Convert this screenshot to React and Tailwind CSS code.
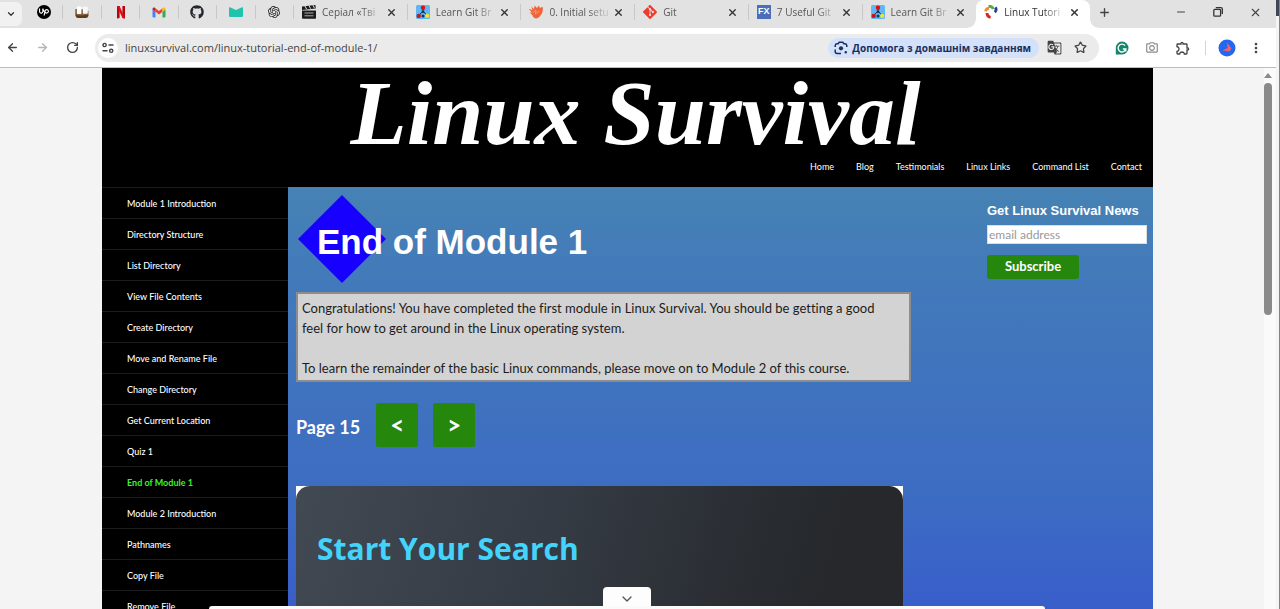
import { ChevronDown, ArrowLeft, ArrowRight, RotateCw, X, Plus, Minus, Star } from 'lucide-react';
import { SiUpwork, SiOpenai, SiGit } from 'react-icons/si';
import { FaGithub } from 'react-icons/fa';
import { MdOutlineExtension, MdMoreVert, MdGTranslate, MdOutlineCameraAlt } from 'react-icons/md';

const UpworkIcon = () => (
  <span className="flex h-3.5 w-3.5 items-center justify-center rounded-full bg-black text-white">
    <SiUpwork className="h-2.5 w-2.5" />
  </span>
);

const MugIcon = () => (
  <svg viewBox="0 0 14 14" className="h-3.5 w-3.5">
    <path d="M.5 4v6q0 3 3.500 3h6.500q3 0 3-3V6z" fill="#8a6440" />
    <path d="M.5 9.500q4 2 13 0-.5 3.500-4 3.500H4Q.5 13 .5 9.500z" fill="#5c3a1e" />
    <rect x="1.800" y="1.500" width="4.800" height="7.500" rx="1" fill="#fff" />
    <rect x="7.600" y="1.500" width="5.200" height="7.200" rx="1" fill="#f8f8f8" />
    <path d="M7.100 4v5.500M1 4v6" stroke="#6f5a48" strokeWidth=".9" />
  </svg>
);

const NetflixIcon = () => (
  <svg viewBox="0 0 10 14" className="h-3.5 w-2.5">
    <path d="M1 1h2.600v12L1 13.500zM6.400 1H9v12.500L6.400 13z" fill="#b1060f" />
    <path d="M1 1h2.600L9 13.500 6.400 13z" fill="#e50914" />
  </svg>
);

const GmailIcon = () => (
  <svg viewBox="0 0 14 11" className="h-[11px] w-3.5">
    <path d="M.5 2.500 3.500 4.700V10.500H1.500a1 1 0 0 1-1-1z" fill="#4285f4" />
    <path d="m13.500 2.500-3 2.200v5.800h2a1 1 0 0 0 1-1z" fill="#34a853" />
    <path d="M3.500 1.200 7 3.900l3.500-2.700v3.500L7 7.400 3.500 4.700z" fill="#ea4335" />
    <path d="M.5 2.500V2C.5.6 2 0 3 .8l.5.4v3.500L.5 2.500z" fill="#c5221f" />
    <path d="M13.500 2.500V2c0-1.400-1.500-2-2.500-1.200l-.5.4v3.500l3-2.200z" fill="#fbbc04" />
  </svg>
);

const MailIcon = () => (
  <svg viewBox="0 0 14 10" className="h-2.5 w-3.5">
    <path d="M0 1q0-1 1-.7L7 3 13 .3q1-.3 1 .7v8q0 1-1 1H1q-1 0-1-1z" fill="#1fc3ae" />
  </svg>
);

const ClapperIcon = () => (
  <svg viewBox="0 0 14 14" className="h-3.5 w-3.5" fill="#1c1c1c">
    <path d="M0 5.400h14V13q0 .8-.8.8H.8Q0 13.800 0 13z" />
    <path d="M0 1.600 13.400 0l.4 3.600L0 5z" />
    <path d="m3 1 1.500 3M7 .6l1.500 3M11 .2l1.500 3" stroke="#e2e2e2" strokeWidth="1" />
    <path d="M2.500 8h9M2.500 10.800h9" stroke="#bbb" strokeWidth=".9" />
  </svg>
);

const BranchIcon = () => (
  <svg viewBox="0 0 14 14" className="h-3.5 w-3.5">
    <rect width="14" height="14" rx="1.500" fill="#5db8f5" />
    <path d="M7 3v4M7 6 2.800 10.500M7 6l4 4.500" stroke="#17293a" strokeWidth="1" fill="none" />
    <rect x="5.800" y="5.600" width="2.400" height="2.200" fill="#1b2c4d" />
    <circle cx="7" cy="2.700" r="2.200" fill="#e00f14" />
    <circle cx="2.700" cy="10.900" r="2.200" fill="#c71622" />
    <circle cx="7" cy="11" r="1.500" fill="#1d2f66" />
    <circle cx="11.200" cy="10.900" r="2.100" fill="#f2e62b" />
  </svg>
);

const HandIcon = () => (
  <svg viewBox="0 0 14 14" className="h-3.5 w-3.5">
    <path d="M0 4q2-.4 3.500 1.500L2.400 1.500 5 4 5.600.4 8 3l1.800-2.600L11 3l2.600-1.200Q14.500 6 12.500 9q-1.600 3.500-5 4.600Q4 13 3.600 10.500L.6 7.500l2.400.3z" fill="#f0643a" />
    <path d="M4 7.500 7 5l-.6 4 4-3" stroke="#ffb08d" strokeWidth=".7" fill="none" />
  </svg>
);

const FxIcon = () => (
  <span className="flex h-3.5 w-3.5 items-center justify-center bg-[#4a6fb8] font-['Liberation_Sans',sans-serif] text-[9px] font-bold text-white">
    FX
  </span>
);

const PinwheelIcon = () => (
  <svg viewBox="0 0 14 14" className="h-3.5 w-3.5" fill="none" strokeWidth="2.800">
    <path d="M1.600 6.400Q2 3.600 5 3.200" stroke="#f08a2c" />
    <path d="M4.600 1.600Q8 .6 9.200 4" stroke="#5aa746" />
    <path d="M11.300 2.400Q13.200 4.800 10.800 7.200" stroke="#2a3f94" />
    <path d="M3 8Q3 11.800 6.600 12.400" stroke="#cf2525" />
  </svg>
);

const LensIcon = () => (
  <svg viewBox="0 0 14 14" className="h-3.5 w-3.5 shrink-0" fill="none" stroke="#1b2f5b" strokeWidth="1.500">
    <path d="M1.200 6V4.500A2 2 0 0 1 3.200 2.700h1L5.200 1.300h3.600l1 1.400h1a2 2 0 0 1 2 1.800V6M1.200 8.500v2a2 2 0 0 0 2 2H7" />
    <circle cx="7" cy="7.300" r="2.100" fill="#1b2f5b" stroke="none" />
    <circle cx="11.800" cy="11.300" r="1.200" fill="#1b2f5b" stroke="none" />
  </svg>
);

const TuneIcon = () => (
  <svg viewBox="0 0 12 12" className="h-3 w-3" fill="none" stroke="#444" strokeWidth="1.400">
    <circle cx="2.600" cy="3" r="1.600" />
    <path d="M6.500 3H11.500M.5 8.800h5" />
    <circle cx="9.200" cy="8.800" r="1.600" />
  </svg>
);

const GrammarlyIcon = () => (
  <svg viewBox="0 0 14 14" className="h-3.5 w-3.5" fill="none">
    <path d="M7 .5a6.500 6.500 0 1 1 0 13H.8V7A6.400 6.400 0 0 1 7 .5z" fill="#13866b" />
    <path d="M10 4.500A3.900 3.900 0 1 0 10.800 8H7.800M10.800 8v2.500" stroke="#fff" strokeWidth="1.400" />
  </svg>
);

const AvatarIcon = () => (
  <svg viewBox="0 0 18 18" className="h-[18px] w-[18px]">
    <circle cx="9" cy="9" r="8.500" fill="#2468f0" />
    <path d="M9 3.500 13.500 9.500 11.500 12.500 4.500 11.500 9.500 9z" fill="#f0616b" />
  </svg>
);

const pinned = [
  ['Upwork', <UpworkIcon />],
  ['Mugs', <MugIcon />],
  ['Netflix', <NetflixIcon />],
  ['Gmail', <GmailIcon />],
  ['GitHub', <FaGithub className="h-3.5 w-3.5 text-[#24292f]" />],
  ['Mail', <MailIcon />],
  ['OpenAI', <SiOpenai className="h-3 w-3 text-[#222]" />],
];

const tabs = [
  ['Серіал «Тві', <ClapperIcon />],
  ['Learn Git Br', <BranchIcon />],
  ['0. Initial setu', <HandIcon />],
  ['Git', <SiGit className="h-3.5 w-3.5 text-[#f03c2e]" />],
  ['7 Useful Git', <FxIcon />],
  ['Learn Git Br', <BranchIcon />],
  ['Linux Tutori', <PinwheelIcon />],
];

const topLinks = ['Home', 'Blog', 'Testimonials', 'Linux Links', 'Command List', 'Contact'];

const lessons = [
  'Module 1 Introduction', 'Directory Structure', 'List Directory', 'View File Contents',
  'Create Directory', 'Move and Rename File', 'Change Directory', 'Get Current Location',
  'Quiz 1', 'End of Module 1', 'Module 2 Introduction', 'Pathnames', 'Copy File', 'Remove File',
];

function TabStrip() {
  return (
    <div className="flex h-7 shrink-0 items-center bg-[#e2e2e2]">
      <button aria-label="Search tabs" className="flex h-6 w-[22px] items-center justify-center rounded-r-md bg-[#f1f1f1] text-[#333]">
        <ChevronDown size={10} strokeWidth={3} />
      </button>
      <div className="ml-[3px] grid w-[269px] grid-cols-7 pb-1">
        {pinned.map(([name, icon]) => (
          <button key={name} aria-label={name} className="flex h-3.5 items-center justify-center border-r border-[#c8c8c8]">
            {icon}
          </button>
        ))}
      </div>
      <div className="grid h-full w-[796px] grid-cols-7 items-center">
        {tabs.map(([name, icon], i) => {
          const active = i === tabs.length - 1;
          return (
            <div
              key={i}
              className={
                active
                  ? 'relative flex h-full items-center rounded-t-lg bg-white pr-2.5 pb-1 pl-2 text-[#333]'
                  : i === 5
                    ? 'mb-1 flex h-4 items-center pr-2.5 pl-2 text-[#555]'
                    : 'mb-1 flex h-4 items-center border-r border-[#c8c8c8] pr-2.5 pl-2 text-[#555]'
              }
            >
              {active && (
                <>
                  <span className="absolute bottom-0 -left-2 h-2 w-2 bg-[radial-gradient(circle_at_0_0,transparent_7px,white_8px)]" />
                  <span className="absolute -right-2 bottom-0 h-2 w-2 bg-[radial-gradient(circle_at_100%_0,transparent_7px,white_8px)]" />
                </>
              )}
              <span className="flex w-5 shrink-0">{icon}</span>
              <span className="min-w-0 flex-1">
                <span className="block w-15 text-[10px] leading-4 whitespace-nowrap [mask-image:linear-gradient(to_right,black_65%,rgba(0,0,0,0.2)_95%)]">
                  {name}
                </span>
              </span>
              <button aria-label="Close tab" className="text-[#333]">
                <X size={11} strokeWidth={3} />
              </button>
            </div>
          );
        })}
      </div>
      <button aria-label="New tab" className="mb-1 ml-2 text-[#444]"><Plus size={13} strokeWidth={2.500} /></button>
      <div className="mb-1 ml-auto flex items-center gap-[26px] pr-3.5 text-[#444]">
        <button aria-label="Minimize"><Minus size={12} /></button>
        <button aria-label="Restore">
          <svg viewBox="0 0 10 10" className="h-2.5 w-2.5" fill="none" stroke="#333" strokeWidth="1.300">
            <rect x=".8" y="2.400" width="6.800" height="6.800" rx="1" />
            <path d="M2.800.7H8q1.300 0 1.300 1.300v5" />
          </svg>
        </button>
        <button aria-label="Close window"><X size={13} /></button>
      </div>
    </div>
  );
}

function Toolbar() {
  return (
    <div className="flex h-10 shrink-0 items-center border-b border-[#bdbdbd] bg-white pr-3 text-[#444]">
      <button aria-label="Back" className="ml-1.5"><ArrowLeft size={13} strokeWidth={2.500} /></button>
      <button aria-label="Forward" className="ml-[17px] text-[#b5b5b5]"><ArrowRight size={13} strokeWidth={2.500} /></button>
      <button aria-label="Reload" className="ml-[17px]"><RotateCw size={13} strokeWidth={2.500} /></button>
      <div className="ml-4 flex h-7 min-w-0 flex-1 items-center rounded-full bg-[#ecebeb] pr-3 pl-[3px]">
        <button aria-label="Site information" className="flex h-5 w-5 items-center justify-center rounded-full bg-white">
          <TuneIcon />
        </button>
        <input
          aria-label="Address"
          defaultValue="linuxsurvival.com/linux-tutorial-end-of-module-1/"
          className="ml-[7px] min-w-0 flex-1 bg-transparent text-[11px] leading-4 text-[#444] outline-none"
        />
        <button className="flex h-5 items-center gap-1 rounded-full bg-[#d3e1fb] pr-2 pl-1.5 text-[10px] leading-4 font-bold whitespace-nowrap text-[#1b2f5b]">
          <LensIcon />
          Допомога з домашнім завданням
        </button>
        <button aria-label="Translate" className="ml-2"><MdGTranslate size={15} /></button>
        <button aria-label="Bookmark" className="ml-3"><Star size={13} strokeWidth={2.300} /></button>
      </div>
      <div className="ml-4 flex items-center gap-4">
        <button aria-label="Grammarly"><GrammarlyIcon /></button>
        <button aria-label="Screenshot" className="text-[#8a8a8a]"><MdOutlineCameraAlt size={14} /></button>
        <button aria-label="Extensions"><MdOutlineExtension size={16} /></button>
      </div>
      <div className="ml-3.5 h-3.5 w-px bg-[#d5d5d5]" />
      <button aria-label="Profile" className="ml-3"><AvatarIcon /></button>
      <button aria-label="Menu" className="ml-3"><MdMoreVert size={16} /></button>
    </div>
  );
}

function SiteHeader() {
  return (
    <header className="flex h-[119px] flex-col justify-between pb-3 text-white">
      <h1 className="pl-4 text-center font-['Liberation_Serif',serif] text-[92px] leading-[91px] font-bold whitespace-nowrap italic">
        Linux Survival
      </h1>
      <nav className="flex justify-end gap-[22px] pr-[11px] text-[9px] leading-4">
        {topLinks.map((t) => <a key={t} href="#">{t}</a>)}
      </nav>
    </header>
  );
}

function Sidebar() {
  return (
    <nav className="w-[186px] shrink-0 text-[9px] font-medium text-white">
      {lessons.map((t) => (
        <a
          key={t}
          href="#"
          className={
            t === 'End of Module 1'
              ? 'flex h-[31px] items-center border-t border-[#1c1c1c] pt-px pl-[25px] font-bold text-[#3df22a]'
              : 'flex h-[31px] items-center border-t border-[#1c1c1c] pt-px pl-[25px]'
          }
        >
          {t}
        </a>
      ))}
    </nav>
  );
}

function Lesson() {
  return (
    <section className="w-[615px] shrink-0">
      <div className="relative mt-2 ml-0.5 flex h-[89px] items-center pl-[19px]">
        <svg viewBox="0 0 88 88" className="absolute top-0 left-0 h-[88px] w-[88px]">
          <path d="M44 0 88 44 44 88 0 44z" fill="#1800ff" />
        </svg>
        <h2 className="relative pt-1 font-['Liberation_Sans',sans-serif] text-[35px] leading-10 font-bold text-white">
          End of Module 1
        </h2>
      </div>
      <div className="mt-2 border-2 border-[#8d8d8d] bg-[#d3d3d3] pt-1 pr-5 pb-0.5 pl-1 text-[13px] leading-5 text-[#1c1c1c] [font-variant-ligatures:none]">
        <p>
          Congratulations! You have completed the first module in Linux Survival. You should be getting a good feel for
          how to get around in the Linux operating system.
        </p>
        <p className="mt-5">
          To learn the remainder of the basic Linux commands, please move on to Module 2 of this course.
        </p>
      </div>
      <div className="mt-[21px] flex items-center text-lg font-bold text-white">
        <span className="pt-1">Page 15</span>
        <button className="ml-4 h-11 w-[42px] rounded-xs bg-[#25880c] text-2xl">&lt;</button>
        <button className="ml-[15px] h-11 w-[42px] rounded-xs bg-[#25880c] text-2xl">&gt;</button>
      </div>
      <div className="mt-[39px] mr-2 bg-white">
        <div className="h-52 rounded-t-[14px] bg-[linear-gradient(105deg,#414953_0%,#353b44_40%,#26292d_80%,#26282b_100%)] px-[21px] pt-[43px]">
          <h3 className="font-['Open_Sans',sans-serif] text-[30px] leading-10 font-bold text-[#43d3fb]">
            Start Your Search
          </h3>
        </div>
      </div>
    </section>
  );
}

function Newsletter() {
  return (
    <form className="ml-auto w-40 shrink-0 pt-4" onSubmit={(e) => e.preventDefault()}>
      <label htmlFor="email" className="block font-['Liberation_Sans',sans-serif] text-[13px] leading-4 font-bold whitespace-nowrap text-white">
        Get Linux Survival News
      </label>
      <input
        id="email"
        type="email"
        placeholder="email address"
        className="mt-1.5 block h-[19px] w-full border border-[#ddd] bg-white px-px text-xs placeholder:text-[#999]"
      />
      <button className="mt-[11px] h-6 w-[92px] rounded-[3px] bg-[#25880c] text-[13px] font-bold text-white">Subscribe</button>
    </form>
  );
}

export default function App() {
  return (
    <div className="relative flex h-screen overflow-hidden bg-white font-['Open_Sans',sans-serif]">
      <div className="flex min-w-0 flex-1 flex-col">
        <TabStrip />
        <Toolbar />
        <div className="flex min-h-0 flex-1">
          <main className="flex min-w-0 flex-1 flex-col overflow-hidden bg-[#f4f4f4] pr-[111px] pl-[102px] font-['Lato',sans-serif]">
            <div className="flex-1 bg-black">
              <SiteHeader />
              <div className="flex">
                <Sidebar />
                <div className="flex flex-1 bg-[linear-gradient(#4682b4_0px,#4278bb_110px,#3d6dc2_300px,#385dcb_430px)] pr-1.5 pl-2">
                  <Lesson />
                  <Newsletter />
                </div>
              </div>
            </div>
          </main>
          <div className="flex w-3 flex-col items-start bg-[#fafafa] pt-[5px]">
            <svg viewBox="0 0 8 5" className="h-[5px] w-2"><path d="M4 0 8 5H0z" fill="#8a8a8a" /></svg>
            <div className="mt-[5px] h-[232px] w-2 rounded-full bg-[#8a8a8a]" />
          </div>
        </div>
      </div>
      <div className="w-1 shrink-0 bg-[linear-gradient(#3f4856_16px,#f4f4f4_16px)]">
        <div className="ml-auto h-full w-px bg-[#7b8494]" />
      </div>
      <div className="absolute bottom-0 left-[209px] flex w-[836px] flex-col items-center">
        <button aria-label="Collapse" className="flex h-[19px] w-12 items-center justify-center rounded-t bg-[#fdfdfd] pt-1 text-[#555]">
          <ChevronDown size={16} />
        </button>
        <div className="h-[3px] w-full rounded-t bg-[#fafafa]" />
      </div>
    </div>
  );
}
